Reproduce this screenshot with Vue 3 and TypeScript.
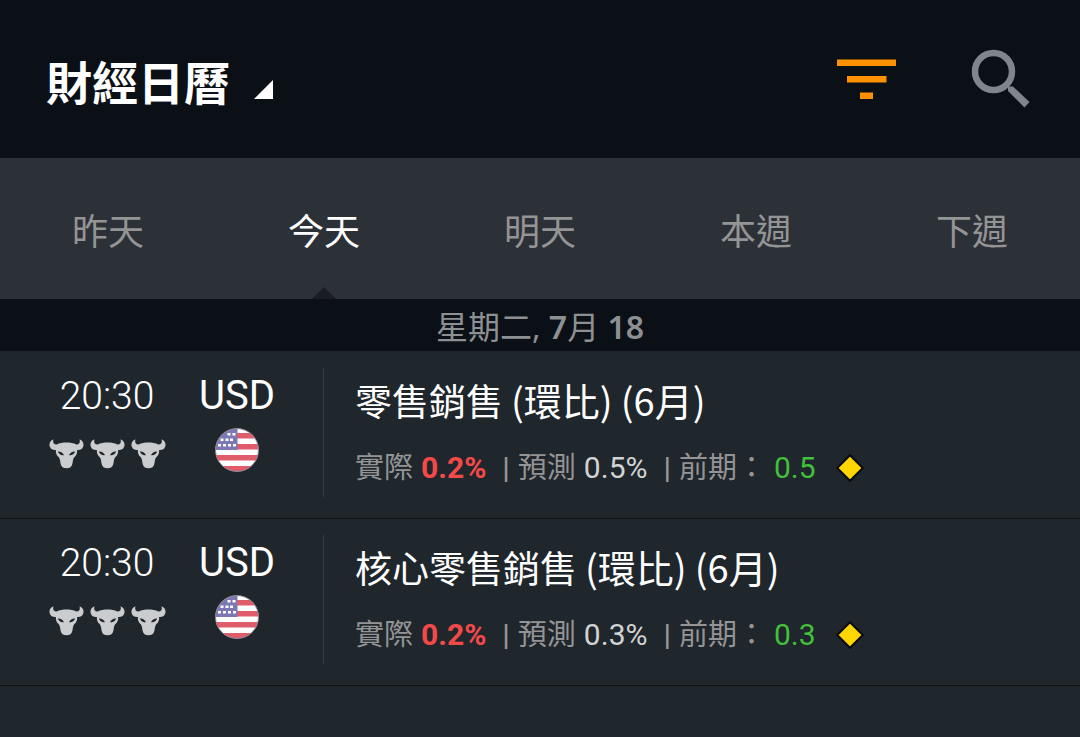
<script setup lang="ts">
import { ref } from 'vue'

interface CalendarEvent {
  id: number
  time: string
  currency: string
  name: string
  basis: string
  period: string
  actual: string
  forecast: string
  previous: string
}

const tabs: string[] = ['昨天', '今天', '明天', '本週', '下週']
const active = ref<number>(1)

const events: CalendarEvent[] = [
  { id: 1, time: '20:30', currency: 'USD', name: '零售銷售', basis: '(環比)', period: '(6月)', actual: '0.2%', forecast: '0.5%', previous: '0.5' },
  { id: 2, time: '20:30', currency: 'USD', name: '核心零售銷售', basis: '(環比)', period: '(6月)', actual: '0.2%', forecast: '0.3%', previous: '0.3' },
]

const stripes: number[] = [5, 16, 27, 38]
</script>

<template>
  <div class="screen">
    <header class="bar">
      <button class="heading" type="button">
        <span>財經日曆</span>
        <svg class="corner" viewBox="0 0 19 19" aria-hidden="true"><path d="M19 0V19H0Z" fill="#fff" /></svg>
      </button>
      <div class="actions">
        <button type="button" aria-label="篩選">
          <svg width="60" height="60" viewBox="0 0 60 60" aria-hidden="true">
            <path d="M0 10.500H59V17H0ZM10 27H49.500V33.500H10ZM23 43.500H36V50H23Z" fill="#ff9100" />
          </svg>
        </button>
        <button type="button" aria-label="搜尋">
          <svg width="60" height="60" viewBox="0 0 60 60" aria-hidden="true">
            <circle cx="22.500" cy="22.500" r="18.500" fill="none" stroke="#80858d" stroke-width="6.500" />
            <path d="M37 37.500H42L58.500 53L53.500 58.500L37 42Z" fill="#80858d" />
          </svg>
        </button>
      </div>
    </header>

    <nav class="tabs">
      <button
        v-for="(tab, i) in tabs"
        :key="tab"
        type="button"
        :class="['tab', { active: i === active }]"
        @click="active = i"
      >{{ tab }}</button>
    </nav>

    <h2 class="date">星期二, <b>7</b>月 <b>18</b></h2>

    <ul class="events">
      <li v-for="event in events" :key="event.id" class="event">
        <div class="when">
          <span class="time">{{ event.time }}</span>
          <span class="bulls">
            <svg v-for="n in 3" :key="n" width="35" height="30" viewBox="0 0 35 30" aria-hidden="true">
              <path
                d="M4.500 .3C3.600 3 4.500 5.600 7.600 5.400C10.500 4 14 3.500 17.500 3.500C21 3.500 24.500 4 27.400 5.400C30.500 5.600 31.400 3 30.500 .3C34 1.600 35.200 4.800 34.200 7.600C33.200 10.600 30.800 11.300 28 11C28.600 13.800 27.400 16.200 25.400 18C24 19.400 24 21.500 23.400 24.800C22.800 28 20.800 29.300 17.500 29.300C14.200 29.300 12.200 28 11.600 24.800C11 21.500 11 19.400 9.600 18C7.600 16.200 6.400 13.800 7 11C4.200 11.300 1.800 10.600 .8 7.600C-.2 4.800 1 1.600 4.500 .3Z"
                fill="#cbcccd"
              />
              <path d="M8.800 12.600C11.800 12.400 14 14 15 16.200C12.500 16.800 9.800 15.500 8.800 12.600ZM26.200 12.600C23.200 12.400 21 14 20 16.200C22.500 16.800 25.200 15.500 26.200 12.600Z" fill="#1f262d" />
            </svg>
          </span>
        </div>
        <div class="market">
          <span class="currency">{{ event.currency }}</span>
          <svg width="44" height="44" viewBox="0 0 44 44" role="img" aria-label="美國">
            <defs>
              <clipPath :id="`flag-${event.id}`"><circle cx="22" cy="22" r="21.500" /></clipPath>
            </defs>
            <g :clip-path="`url(#flag-${event.id})`">
              <rect width="44" height="44" fill="#fff" />
              <rect v-for="y in stripes" :key="y" x="0" :y="y" width="44" height="5.500" fill="#e05c6b" />
              <rect width="22.500" height="22" fill="#7d78b4" />
              <path d="M12.500 6.200H15.500M17.500 6.200H20.500M5.500 11.700H8.500M10.500 11.700H13.500M15 11.700H18M3 17.300H6M8 17.300H11M13 17.300H16M18 17.300H21" stroke="#fff" stroke-width="2.500" />
            </g>
            <circle cx="22" cy="22" r="21.500" fill="none" stroke="#8e8390" stroke-width="1" />
          </svg>
        </div>
        <div class="details">
          <h3 class="title">
            <span>{{ event.name }}</span>
            <span class="note">{{ event.basis }}</span>
            <span class="note">{{ event.period }}</span>
          </h3>
          <p class="figures">
            <span>實際</span>
            <b class="value actual">{{ event.actual }}</b>
            <span class="pipe">|</span>
            <span>預測</span>
            <span class="value forecast">{{ event.forecast }}</span>
            <span class="pipe">|</span>
            <span>前期：</span>
            <span class="value previous">{{ event.previous }}</span>
            <svg width="28" height="28" viewBox="0 0 28 28" aria-hidden="true">
              <path d="M14 1.200L26.800 14L14 26.800L1.200 14Z" fill="#ffd600" stroke="#090b0d" stroke-width="2" />
            </svg>
          </p>
        </div>
      </li>
    </ul>
  </div>
</template>

<style>
body {
  margin: 0;
  background: #1f262c;
}
</style>

<style scoped>
.screen {
  min-height: 100vh;
  background: #1f262c;
  color: #fff;
  font-family: Roboto, "Noto Sans CJK TC", sans-serif;
}

button {
  margin: 0;
  padding: 0;
  border: 0;
  background: none;
  color: inherit;
  font: inherit;
  cursor: pointer;
}

.bar {
  display: flex;
  align-items: center;
  justify-content: space-between;
  box-sizing: border-box;
  height: 158px;
  padding: 0 49px 0 46px;
  background: #0b0f16;
}

.heading {
  display: flex;
  align-items: flex-end;
  gap: 24px;
  padding-top: 10px;
  font-size: 46px;
  font-weight: 700;
  line-height: 64px;
}

.corner {
  width: 19px;
  height: 19px;
  margin-bottom: 17px;
}

.actions {
  display: flex;
  gap: 74px;
}

.actions svg {
  display: block;
}

.tabs {
  display: grid;
  grid-template-columns: repeat(5, 1fr);
  height: 141px;
  background: #2c3138;
}

.tab {
  position: relative;
  color: #949494;
  font-size: 36px;
}

.tab.active {
  color: #fff;
}

.tab.active::after {
  position: absolute;
  bottom: 0;
  left: 50%;
  margin-left: -12px;
  border: 12px solid transparent;
  border-top: 0;
  border-bottom-color: #191d23;
  content: "";
}

.date {
  margin: 0;
  padding-top: 4px;
  background: #0b0f16;
  color: #8d9093;
  font-family: "Noto Sans", "Noto Sans CJK TC", sans-serif;
  font-size: 32px;
  font-weight: 400;
  line-height: 48px;
  text-align: center;
}

.date b {
  font-weight: 600;
}

.events {
  margin: 0;
  padding: 0;
  border-bottom: 1px solid #101418;
  list-style: none;
}

.event {
  display: flex;
  padding: 17px 24px 21px 42px;
}

.event + .event {
  padding-top: 16px;
  border-top: 1px solid #101418;
}

.when,
.market {
  display: flex;
  flex-direction: column;
  align-items: center;
  width: 130px;
}

.time,
.currency {
  font-size: 40px;
  line-height: 56px;
}

.time {
  font-size: 39px;
  font-weight: 300;
}

.bulls {
  display: flex;
  gap: 6px;
  padding-top: 15px;
}

.market svg {
  margin-top: 4px;
}

.details {
  flex: 1;
  margin-left: 21px;
  padding-left: 31px;
  border-left: 1px solid #363c45;
}

.title {
  display: flex;
  align-items: baseline;
  gap: 8px;
  margin: 0;
  font-family: "Noto Sans CJK TC", sans-serif;
  font-size: 37px;
  font-weight: 400;
  line-height: 64px;
}

.note {
  font-size: 38px;
}

.figures {
  display: flex;
  align-items: center;
  margin: 0;
  padding-top: 7px;
  color: #949494;
  font-size: 29px;
  line-height: 58px;
  white-space: nowrap;
}

.value {
  padding-left: 8px;
  font-size: 30px;
}

.actual {
  color: #f44949;
  font-weight: 700;
}

.forecast {
  color: #d2d3d4;
}

.pipe {
  padding: 0 8px 0 16px;
  font-size: 30px;
  font-weight: 600;
}

.previous {
  padding-right: 20px;
  color: #43bf3c;
}
</style>
